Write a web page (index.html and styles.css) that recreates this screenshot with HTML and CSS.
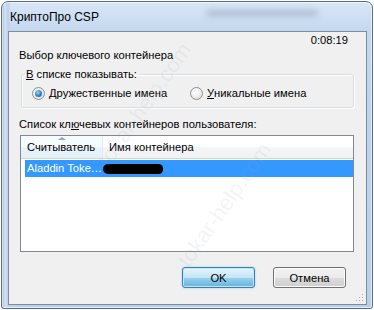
FILE: index.html
```html
<!DOCTYPE html>
<html lang="ru">
<head>
<meta charset="UTF-8">
<title>КриптоПро CSP</title>
<link rel="stylesheet" href="styles.css">
</head>
<body>

<div class="window">
    <div class="titlebar">
        <span class="title">КриптоПро CSP</span>
        <span class="title-blur"></span>
    </div>

    <div class="client">
        <div class="timer">0:08:19</div>
        <div class="heading">Выбор ключевого контейнера</div>

        <fieldset class="group">
            <legend><u>В</u> списке показывать:</legend>
            <label class="radio first"><span class="dot checked"></span><u>Д</u>ружественные имена</label>
            <label class="radio"><span class="dot"></span><u>У</u>никальные имена</label>
        </fieldset>

        <div class="list-label">Список кл<u>ю</u>чевых контейнеров пользователя:</div>

        <div class="list">
            <div class="list-head">
                <div class="col col-reader"><span class="sort-arrow"></span>Считыватель</div>
                <div class="col col-name">Имя контейнера</div>
            </div>
            <div class="rows">
                <div class="row selected">
                    <span class="cell">Aladdin Toke…</span>
                    <span class="redact"></span>
                </div>
            </div>
        </div>

        <div class="buttons">
            <button class="btn default">OK</button>
            <button class="btn">Отмена</button>
        </div>

        <div class="grip"></div>
    </div>

    <!-- watermark of the source site -->
    <div class="watermark wm-top">tokar-help.com</div>
    <div class="watermark wm-bottom">tokar-help.com</div>
</div>

</body>
</html>
```

FILE: styles.css
```css
body {
    margin: 0;
    background: #fff;
    font-family: "Liberation Sans", Arial, sans-serif;
    font-size: 12px;
    color: #000;
}
.window {
    position: relative;
    overflow: hidden;
    width: 370px;
    height: 306px;
    margin: 1px 0 0 1px;
    padding: 0;
    border: 1px solid #5d6b7a;
    border-radius: 7px 7px 3px 3px;
    background: linear-gradient(to right, #9fb7d2 0, #d4e3f4 3px, #bcd2ea 6px, transparent 9px),
                linear-gradient(to bottom, #d9e7f6 0, #c4d8ef 28px, #bcd3ec 120px, #b9d0ea 100%);
    box-shadow: inset 0 0 0 1px rgba(255, 255, 255, 0.6);
}
.titlebar {
    height: 28px;
    display: flex;
    align-items: center;
    padding-left: 8px;
    padding-bottom: 1px;
}
.title {
    line-height: 14px;
    padding-top: 1px;
}
.title-blur {
    margin-left: 108px;
    width: 110px;
    height: 6px;
    margin-top: -6px;
    background: #a3b3c6;
    filter: blur(3px);
    opacity: 0.8;
}
.client {
    position: relative;
    width: 357px;
    height: 272px;
    margin-left: 6px;
    border: 1px solid #7d8c9e;
    background: #f0f0f0;
    font-size: 11.2px;
}
.timer {
    line-height: 14px;
    text-align: right;
    padding-right: 18px;
    margin-top: 1px;
}
.heading {
    line-height: 14px;
    margin-top: 1px;
    padding-left: 10px;
}
.group {
    display: flex;
    margin: 5px 12px 0 12px;
    padding: 5px 10px 7px 10px;
    border: 1px solid #d5dfe5;
    border-radius: 3px;
    box-shadow: inset 1px 1px 0 #fff, 1px 1px 0 #fff;
}
.group legend {
    line-height: 14px;
    padding: 0 2px;
    margin-left: -8px;
}
.radio {
    display: flex;
    align-items: center;
    line-height: 14px;
}
.radio.first {
    width: 158px;
}
.dot {
    width: 11px;
    height: 11px;
    margin-right: 4px;
    border: 1px solid #8e8f8f;
    border-radius: 50%;
    background: radial-gradient(circle at 40% 35%, #fff 0, #f0f0f0 45%, #d6d6d6 100%);
    position: relative;
}
.dot.checked::after {
    content: "";
    position: absolute;
    left: 2px;
    top: 2px;
    width: 7px;
    height: 7px;
    border-radius: 50%;
    background: radial-gradient(circle at 40% 35%, #9fd4f5 0, #2f7fc4 55%, #1b4f8c 100%);
}
.list-label {
    line-height: 14px;
    margin-top: 9px;
    padding-left: 10px;
}
.list {
    height: 115px;
    margin: 4px 12px 0 11px;
    border: 1px solid #828790;
    background: #fff;
}
.list-head {
    display: flex;
    height: 22px;
    border-bottom: 1px solid #d5d5d5;
    background: linear-gradient(to bottom, #fff 0, #fff 50%, #f4f5f7 51%, #f1f2f4 100%);
}
.col {
    position: relative;
    line-height: 22px;
    padding-left: 6px;
}
.col-reader {
    width: 75px;
    border-right: 1px solid #e3e8ee;
    background: linear-gradient(to bottom, #f6fbfe 0, #f6fbfe 50%, #e8f3fa 51%, #e4f0f8 100%);
}
.col-name {
    flex: 1;
}
.sort-arrow {
    position: absolute;
    left: 37px;
    top: 1px;
    width: 0;
    height: 0;
    border-left: 4px solid transparent;
    border-right: 4px solid transparent;
    border-bottom: 3px solid #97a5b5;
}
.rows {
    padding: 1px 0 0 4px;
}
.row {
    display: flex;
    align-items: center;
    height: 17px;
}
.row.selected {
    background: #3399ff;
    color: #fff;
}
.cell {
    padding-left: 2px;
    line-height: 17px;
}
.redact {
    width: 60px;
    height: 10px;
    margin-left: 1px;
    border-radius: 6px 5px 5px 6px;
    background: #000;
}
.buttons {
    display: flex;
    justify-content: flex-end;
    gap: 18px;
    margin: 15px 20px 0 0;
}
.btn {
    width: 73px;
    height: 21px;
    padding: 0;
    font-family: inherit;
    font-size: 11.2px;
    color: #000;
    border: 1px solid #707070;
    border-radius: 3px;
    background: linear-gradient(to bottom, #f2f2f2 0, #ebebeb 50%, #dddddd 51%, #cfcfcf 100%);
    box-shadow: inset 0 0 0 1px #fcfcfc;
}
.btn.default {
    border-color: #3c7fb1;
    background: linear-gradient(to bottom, #e5f4fc 0, #c4e5f6 50%, #98d1ef 51%, #68b3db 100%);
    box-shadow: inset 0 0 0 1px #bfe6fa, 0 0 2px #7ec9f0;
}
.grip {
    position: absolute;
    right: 3px;
    bottom: 3px;
    width: 8px;
    height: 8px;
    background-image: radial-gradient(circle, #b0b0b0 0.8px, transparent 1px);
    background-size: 3px 3px;
    clip-path: polygon(100% 0, 100% 100%, 0 100%);
}
.watermark {
    position: absolute;
    font-size: 22px;
    color: rgba(150, 160, 175, 0.12);
    transform: rotate(-55deg);
    white-space: nowrap;
    pointer-events: none;
}
.wm-top {
    left: 70px;
    top: 90px;
}
.wm-bottom {
    left: 150px;
    top: 190px;
}
```
